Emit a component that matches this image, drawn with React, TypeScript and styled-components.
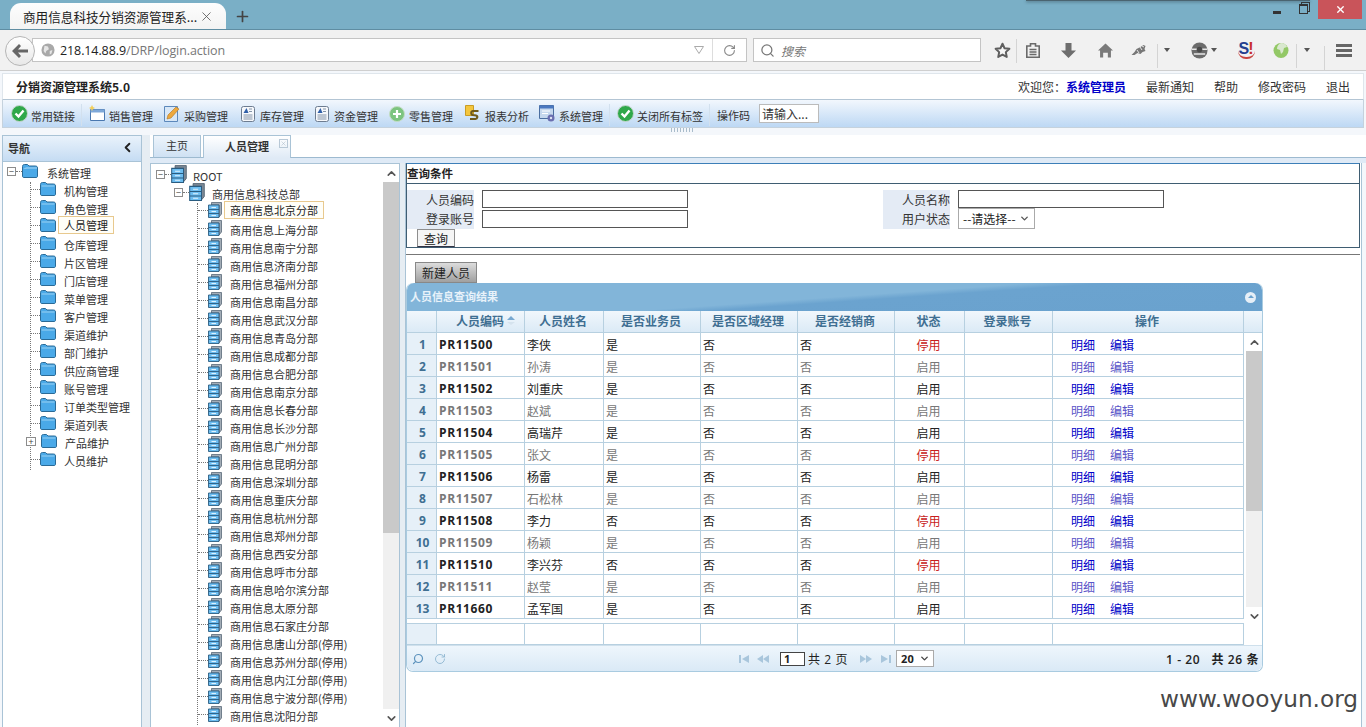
import React from 'react'
import styled, { createGlobalStyle } from 'styled-components'
import { ChevronDown, ChevronLeft, ChevronUp, Plus, RotateCw, Search, X } from 'lucide-react'

const CJK = `"Noto Sans CJK SC", "Liberation Sans", sans-serif`

const Global = createGlobalStyle`
  html, body { margin: 0; padding: 0; background: #fff; }
  body { font-family: ${CJK}; font-size: 12px; color: #222; }
  * { box-sizing: border-box; }
`

const Page = styled.div`
  width: 1366px;
  height: 727px;
  overflow: hidden;
  position: relative;
  display: flex;
  flex-direction: column;
`

/* ---------- browser chrome ---------- */

const TitleBar = styled.div`
  height: 29px;
  flex: none;
  background: #7aafc6;
  display: flex;
  align-items: flex-end;
  padding-left: 10px;
  position: relative;
`

const BrowserTab = styled.div`
  width: 216px;
  height: 26px;
  background: linear-gradient(#fdfdfd, #f3f3f3);
  border-radius: 11px 11px 0 0;
  display: flex;
  align-items: center;
  padding-left: 13px;
  font-size: 12.6px;
  color: #222;
  white-space: nowrap;
`

const TabTitle = styled.span`
  flex: 1;
  overflow: hidden;
`

const NewTab = styled.div`
  margin-left: 8px;
  height: 26px;
  display: flex;
  align-items: center;
  color: #444;
`

const Shadow = styled.div`
  position: absolute;
  top: 0;
  left: 1026px;
  width: 284px;
  height: 1px;
  background: #4a6470;
  box-shadow: 0 1px 3px #38505c;
`

const WindowButtons = styled.div`
  margin-left: auto;
  align-self: flex-start;
  display: flex;
  align-items: center;
  height: 19px;
  padding-right: 4px;
`

const Minimize = styled.span`
  width: 8px;
  height: 3px;
  background: #333;
  margin: 6px 18px 0 0;
`

const Restore = styled.span`
  width: 9px;
  height: 10px;
  border: 1px solid #333;
  border-top-width: 2px;
  margin: 0 10px 2px 0;
  box-shadow: 2px -2px 0 -1px #7aafc6, 2px -2px 0 0 #333;
`

const CloseBtn = styled.div`
  width: 44px;
  height: 19px;
  background: #c9545a;
  color: #fff;
  display: flex;
  align-items: center;
  justify-content: center;
`

const NavBar = styled.div`
  height: 42px;
  flex: none;
  background: #f1f1f1;
  border-top: 1px solid #5f8da2;
  border-bottom: 1px solid #cfcfcf;
  display: flex;
  align-items: center;
  padding-left: 5px;
  position: relative;
`

const BackBtn = styled.div`
  width: 30px;
  height: 30px;
  border-radius: 50%;
  border: 1px solid #b5b5b5;
  background: linear-gradient(#fff, #e8e8e8);
  display: flex;
  align-items: center;
  justify-content: center;
  flex: none;
  z-index: 1;
  margin-top: 1px;
`

const UrlBox = styled.div`
  width: 715px;
  height: 24px;
  margin-left: -3px;
  background: #fff;
  border: 1px solid #c4c4c4;
  display: flex;
  align-items: center;
  padding-left: 8px;
  font-family: "Open Sans", "Liberation Sans", sans-serif;
  font-size: 12.5px;
  letter-spacing: -.1px;
  color: #222;
`

const UrlPath = styled.span`
  color: #777;
`

const UrlTail = styled.div`
  margin-left: auto;
  height: 100%;
  display: flex;
  align-items: center;
  color: #888;
`

const UrlDivider = styled.span`
  width: 1px;
  height: 100%;
  background: #ddd;
  margin: 0 10px 0 8px;
`

const SearchBox = styled.div`
  width: 228px;
  height: 24px;
  margin-left: 6px;
  background: #fff;
  border: 1px solid #c4c4c4;
  display: flex;
  align-items: center;
  gap: 6px;
  padding-left: 6px;
  font-size: 12px;
  font-style: italic;
  color: #777;
`

const BrowserTools = styled.div`
  display: flex;
  align-items: center;
  margin-left: 10px;
  flex: 1;
  color: #666;
`

const ToolSlot = styled.span<{ $w: number; $ml?: number; $div?: number }>`
  width: ${p => p.$w}px;
  margin-left: ${p => p.$ml ?? 0}px;
  flex: none;
  display: flex;
  align-items: center;
  justify-content: center;
  position: relative;
  ${p =>
    p.$div !== undefined &&
    `&::before {
      content: '';
      position: absolute;
      left: ${p.$div}px;
      top: -4px;
      width: 1px;
      height: 24px;
      background: #d4d4d4;
    }`}
`

const Caret = styled.span`
  width: 0;
  height: 0;
  border-left: 3.5px solid transparent;
  border-right: 3.5px solid transparent;
  border-top: 4px solid #555;
`

const Globe = () => (
  <svg width="14" height="14" viewBox="0 0 16 16" style={{ flex: 'none', marginRight: 5 }}>
    <circle cx="8" cy="8" r="7.5" fill="#a9a9a9" />
    <path d="M4 3l4 1 1 3-3 2-1 3-2-3zM10 9l3-1-1 4-2 1z" fill="#e6e6e6" />
  </svg>
)

const ToolIcons = () => (
  <BrowserTools>
    <ToolSlot $w={22}>
      <svg width="17" height="17" viewBox="0 0 24 24">
        <path d="M12 2.500l2.900 6.300 6.800.8-5 4.700 1.300 6.800-6-3.400-6 3.400 1.300-6.800-5-4.700 6.800-.8z" fill="#f6f6f6" stroke="#5f5f5f" strokeWidth="2.800" strokeLinejoin="round" />
      </svg>
    </ToolSlot>
    <ToolSlot $w={40} $div={3}>
      <svg width="14" height="15" viewBox="0 0 14 15">
        <path d="M.8 3h3.700V.8h5V3h3.700v11.200H.8z" fill="none" stroke="#6a6a6a" strokeWidth="1.600" />
        <path d="M3.500 6.500h7M3.500 9h7M3.500 11.500h7" stroke="#6a6a6a" strokeWidth="1.500" />
      </svg>
    </ToolSlot>
    <ToolSlot $w={30}>
      <svg width="15" height="15" viewBox="0 0 15 15"><path d="M4.500 0h6v7.500H15L7.500 15 0 7.500h4.500z" fill="#6e6e6e" /></svg>
    </ToolSlot>
    <ToolSlot $w={44}>
      <svg width="15" height="15" viewBox="0 0 16 16"><path d="M8 .5l8 7.500h-2.200v7.500h-3.300v-5H5.500v5H2.200V8H0z" fill="#7a7a7a" /></svg>
    </ToolSlot>
    <ToolSlot $w={24}>
      <svg width="16" height="13" viewBox="0 0 16 13">
        <path d="M.5 11l3-3 2-3 4-2 3-2 2 1-1 3 1 2-3 1-2 2-3-1-3 2z" fill="#777" />
        <path d="M9 3l2 3M6 6l2 3M11 2l2 1" stroke="#e6e6e6" strokeWidth="1" />
      </svg>
    </ToolSlot>
    <ToolSlot $w={32} $div={6}><Caret /></ToolSlot>
    <ToolSlot $w={18} $ml={7}>
      <svg width="17" height="17" viewBox="0 0 18 18">
        <circle cx="9" cy="9" r="8.500" fill="#6c6c6c" />
        <path d="M1 7h16v1.500H1zM3 12h12v1.500H3z" fill="#e8e8e8" />
        <circle cx="9" cy="8" r="3" fill="#4a4a4a" />
      </svg>
    </ToolSlot>
    <ToolSlot $w={12}><Caret /></ToolSlot>
    <ToolSlot $w={52}>
      <SJ>S<SJBang>!</SJBang></SJ>
    </ToolSlot>
    <ToolSlot $w={18}>
      <svg width="16" height="17" viewBox="0 0 16 17">
        <circle cx="8" cy="8.500" r="7.500" fill="#93c866" />
        <path d="M8 1c3 0 5.500 2 6 4l-3 1-1 4-2 2-1-4-3-1C4 4 5.500 2 8 1z" fill="#d9e8cf" />
      </svg>
    </ToolSlot>
    <ToolSlot $w={34} $div={6}><Caret /></ToolSlot>
    <ToolSlot $w={1} $div={0} />
    <Hamburger />
  </BrowserTools>
)

const SJ = styled.span`
  font-family: "Liberation Sans", sans-serif;
  font-weight: 700;
  font-size: 16px;
  color: #24408f;
  line-height: 1;
  border-bottom: 2px solid #c8453f;
  border-radius: 0 0 8px 8px;
  padding: 0 1px;
`

const SJBang = styled.span`
  color: #c8302c;
  margin-left: -1px;
`

const Hamburger = styled.span`
  width: 16px;
  height: 13px;
  margin-left: 11px;
  flex: none;
  border-top: 3px solid #666;
  border-bottom: 3px solid #666;
  background: linear-gradient(#666, #666) center / 100% 3px no-repeat;
`

/* ---------- application header ---------- */

const AppWrap = styled.div`
  flex: 1;
  min-height: 0;
  background: #f4f7fb;
  display: flex;
  flex-direction: column;
  padding-top: 2px;
`

const AppHead = styled.div`
  height: 27px;
  flex: none;
  background: #fff;
  margin: 0 2px;
  border: 1px solid #dfe6ec;
  border-bottom: 1px solid #b3c5d4;
  display: flex;
  align-items: center;
  padding: 0 13px 0 13px;
`

const AppTitle = styled.div`
  font-weight: 600;
  font-size: 12px;
  color: #222;
`

const HeadLinks = styled.div`
  margin-left: auto;
  display: flex;
  gap: 20px;
  color: #333;
`

const UserName = styled.b`
  color: #0000c8;
  font-weight: 600;
`

const ToolBar = styled.div`
  height: 28px;
  flex: none;
  margin: 0 2px;
  border: 1px solid #c5d2dd;
  border-top: 0;
  background: linear-gradient(#f2f7fd, #bdd8f4);
  display: flex;
  align-items: center;
  padding-left: 8px;
`

const ToolItem = styled.div<{ $w: number; $sep?: boolean }>`
  width: ${p => p.$w}px;
  flex: none;
  display: flex;
  align-items: center;
  gap: 4px;
  font-size: 11px;
  color: #333;
  white-space: nowrap;
  position: relative;
  ${p =>
    p.$sep &&
    `&::after {
      content: '';
      position: absolute;
      right: 7px;
      top: 1px;
      width: 1px;
      height: 22px;
      background: #d2e0ee;
    }`}
`

const ToolGlyph = styled.span`
  width: 16px;
  height: 17px;
  flex: none;
  display: flex;
  align-items: center;
  justify-content: center;
`

const ToolText = styled.span`
  margin-top: 5px;
`

const OpLabel = styled.span`
  width: 42px;
  margin-top: 3px;
  font-size: 11px;
  color: #333;
`

const OpInput = styled.div`
  width: 60px;
  height: 19px;
  background: #fff;
  border: 1px solid #bbb;
  padding-left: 2px;
  font-size: 12px;
  line-height: 17px;
  color: #333;
  margin-bottom: 1px;
`

const GripBar = styled.div`
  height: 7px;
  flex: none;
  display: flex;
  justify-content: center;
`

const Grip = styled.span`
  width: 24px;
  height: 4px;
  background: repeating-linear-gradient(90deg, #a9bccb 0 1px, transparent 1px 3px);
`

/* ---------- main area ---------- */

const Main = styled.div`
  flex: 1;
  min-height: 0;
  display: flex;
`

const NavPanel = styled.div`
  width: 140px;
  margin-left: 2px;
  flex: none;
  background: #fff;
  border: 1px solid #a9c3d6;
  border-bottom: 0;
  display: flex;
  flex-direction: column;
`

const NavHead = styled.div`
  height: 26px;
  flex: none;
  background: linear-gradient(#e9f2fb, #c5dcf3);
  border-bottom: 1px solid #a9c3d6;
  display: flex;
  align-items: center;
  justify-content: space-between;
  padding: 0 6px 2px 5px;
  font-weight: 600;
  font-size: 11px;
  color: #333;
`

const Splitter = styled.div<{ $w: number }>`
  width: ${p => p.$w}px;
  flex: none;
  background: #e6edf3;
`

const Work = styled.div`
  flex: 1;
  min-width: 0;
  display: flex;
  flex-direction: column;
`

const TabStrip = styled.div`
  height: 23px;
  flex: none;
  background: #fff;
  border-bottom: 1px solid #9dbad0;
  display: flex;
  align-items: flex-end;
  padding-left: 3px;
  gap: 2px;
`

const PageTab = styled.div<{ $active?: boolean; $w: number }>`
  width: ${p => p.$w}px;
  height: 23px;
  margin-bottom: -1px;
  border: 1px solid #a9c3d6;
  border-bottom: ${p => (p.$active ? '0' : '1px solid #9dbad0')};
  background: ${p => (p.$active ? 'linear-gradient(#fff, #dfeaf6)' : 'linear-gradient(#edf4fb, #cfe1f3)')};
  display: flex;
  align-items: center;
  justify-content: ${p => (p.$active ? 'flex-start' : 'center')};
  padding: 0 0 3px ${p => (p.$active ? '21px' : '0')};
  font-size: 11px;
  font-weight: ${p => (p.$active ? 600 : 400)};
  color: #333;
  position: relative;
`

const TabClose = styled.span`
  position: absolute;
  top: 3px;
  right: 2px;
  width: 9px;
  height: 9px;
  border: 1px solid #b8c8d6;
  color: #9fb0be;
  display: flex;
  align-items: center;
  justify-content: center;
`

const StripGap = styled.div`
  height: 5px;
  flex: none;
  background: #dfeaf6;
`

const WorkBody = styled.div`
  flex: 1;
  min-height: 0;
  display: flex;
`

const TreePanel = styled.div`
  width: 250px;
  flex: none;
  background: #fff;
  border: 1px solid #a9c3d6;
  border-bottom: 0;
  display: flex;
  overflow: hidden;
`

const TreeScroll = styled.div`
  flex: 1;
  min-width: 0;
  padding: 3px 0 0 5px;
  overflow: hidden;
`

const ScrollBar = styled.div`
  width: 16px;
  flex: none;
  background: #f0f0f0;
  display: flex;
  flex-direction: column;
  align-items: center;
  color: #555;
`

const ScrollArrow = styled.div`
  height: 18px;
  flex: none;
  background: #fff;
  align-self: stretch;
  display: flex;
  align-items: center;
  justify-content: center;
`

const ScrollThumb = styled.div<{ $h: number }>`
  height: ${p => p.$h}px;
  flex: none;
  align-self: stretch;
  background: #c9c9c9;
`

const ScrollRest = styled.div`
  flex: 1;
`

/* tree */

const TreeRow = styled.div`
  height: 18px;
  display: flex;
  align-items: center;
  white-space: nowrap;
  font-size: 11px;
  color: #333;
`

const Toggle = styled.span`
  width: 9px;
  height: 9px;
  flex: none;
  border: 1px solid #8c8c8c;
  background: #fff;
  display: flex;
  align-items: center;
  justify-content: center;
  color: #444;
  font-size: 9px;
  line-height: 1;
  margin-top: -4px;
`

const Dots = styled.span<{ $w: number }>`
  width: ${p => p.$w}px;
  flex: none;
  border-top: 1px dotted #777;
  margin-top: -4px;
`

const Branch = styled.div<{ $ml: number }>`
  margin-left: ${p => p.$ml}px;
  border-left: 1px dotted #777;
`

const NodeLabel = styled.span<{ $ml: number; $selected?: boolean }>`
  margin-left: ${p => p.$ml}px;
  ${p =>
    p.$selected &&
    `
    border: 1px solid #e8c98e;
    background: #fffef8;
    height: 18px;
    line-height: 16px;
    padding: 0 5px;
    margin-left: ${p.$ml - 6}px;
    margin-top: -4px;
    color: #222;
  `}
`

const FolderIcon = ({ open }: { open?: boolean }) => (
  <svg width="16" height="14" viewBox="0 0 16 14" style={{ flex: 'none', marginTop: -5 }}>
    <path d="M.5 2.500C.5 1 1.500.5 2.500.5h3L7 2h6.500c1 0 2 .5 2 2v8c0 1-.5 1.500-1.500 1.500H2c-1 0-1.500-.5-1.500-1.500z" fill="#4aa9e8" stroke="#2a6a96" />
    {open ? <path d="M1 5l3-1.500h11v1H5z" fill="#a8d8f6" /> : <path d="M1.500 3.500h13v1h-13z" fill="#9ad0f2" />}
  </svg>
)

const CabinetIcon = ({ big }: { big?: boolean }) => (
  <svg width={big ? 16 : 14} height={big ? 18 : 16} viewBox="0 0 14 16" style={{ flex: 'none', marginTop: -4 }}>
    <path d="M3.500.5h10v11.500l-2.500 3V3h-7.500z" fill={big ? '#7d8894' : '#a3adb7'} stroke="#47596a" strokeWidth=".7" />
    <path d="M.5 3h10.500v12.500H.5z" fill="#6dbdf0" stroke="#2a5c80" strokeWidth=".9" />
    <path d="M.5 7.500h10.500M.5 11.500h10.500" stroke="#2a5c80" strokeWidth=".9" fill="none" />
    <path d="M3.500 5.500h4.500M3.500 9.500h4.500M3.500 13.500h4.500" stroke="#dff1fc" strokeWidth="1" fill="none" />
  </svg>
)

const navItems = ['机构管理', '角色管理', '人员管理', '仓库管理', '片区管理', '门店管理', '菜单管理', '客户管理', '渠道维护', '部门维护', '供应商管理', '账号管理', '订单类型管理', '渠道列表', '产品维护', '人员维护']

const branches = ['北京', '上海', '南宁', '济南', '福州', '南昌', '武汉', '青岛', '成都', '合肥', '南京', '长春', '长沙', '广州', '昆明', '深圳', '重庆', '杭州', '郑州', '西安', '呼市', '哈尔滨', '太原', '石家庄', '唐山', '苏州', '内江', '宁波', '沈阳']

const stopped = ['唐山', '苏州', '内江', '宁波']

const NavBody = styled.div`
  flex: 1;
  overflow: hidden;
  padding: 2px 0 0 4px;
`

const NavPlus = styled(Toggle)`
  margin-left: -5px;
  margin-right: 5px;
  width: 10px;
`

const NavTree = () => (
  <NavBody>
    <TreeRow>
      <Toggle>−</Toggle>
      <Dots $w={6} />
      <FolderIcon open />
      <NodeLabel $ml={9}>系统管理</NodeLabel>
    </TreeRow>
    <Branch $ml={23}>
      {navItems.map((n, i) => (
        <TreeRow key={n + i}>
          {n === '产品维护' ? <NavPlus>+</NavPlus> : <Dots $w={9} />}
          <FolderIcon />
          <NodeLabel $ml={8} $selected={n === '人员管理'}>{n}</NodeLabel>
        </TreeRow>
      ))}
    </Branch>
  </NavBody>
)

const OrgIndent = styled.div`
  margin-left: 18px;
`

const OrgTree = () => (
  <TreeScroll>
    <TreeRow>
      <Toggle>−</Toggle>
      <Dots $w={6} />
      <CabinetIcon big />
      <NodeLabel $ml={6}>ROOT</NodeLabel>
    </TreeRow>
    <OrgIndent>
      <TreeRow>
        <Toggle>−</Toggle>
        <Dots $w={6} />
        <CabinetIcon big />
        <NodeLabel $ml={7}>商用信息科技总部</NodeLabel>
      </TreeRow>
      <Branch $ml={23}>
        {branches.map((b, i) => (
          <TreeRow key={b}>
            <Dots $w={10} />
            <CabinetIcon />
            <NodeLabel $ml={8} $selected={i === 0}>
              商用信息{b}分部{stopped.includes(b) ? '(停用)' : ''}
            </NodeLabel>
          </TreeRow>
        ))}
      </Branch>
    </OrgIndent>
  </TreeScroll>
)

/* ---------- query box ---------- */

const RightPane = styled.div`
  flex: 1;
  min-width: 0;
  background: #fff;
  border-left: 1px solid #a9c3d6;
  margin-right: 4px;
  border-right: 1px solid #a9c3d6;
`

const QueryBox = styled.div`
  height: 85px;
  margin-right: 1px;
  border: 1px solid #3f5d72;
  border-top-color: #3d7fb8;
  display: flex;
  flex-direction: column;
`

const QueryTitle = styled.div`
  height: 20px;
  flex: none;
  border-bottom: 1px solid #3f5d72;
  font-weight: 600;
  font-size: 11.5px;
  line-height: 19px;
  color: #222;
`

const QueryGrid = styled.div`
  display: flex;
  padding-top: 6px;
`

const FieldGroup = styled.div`
  width: 476px;
  display: flex;
  gap: 8px;
`

const FieldLabels = styled.div`
  width: 67px;
  height: 39px;
  background: #e4ebf5;
  text-align: right;
  line-height: 19px;
  color: #333;
`

const FieldControls = styled.div`
  display: flex;
  flex-direction: column;
  gap: 2px;
`

const TextBox = styled.div`
  width: 206px;
  height: 18px;
  background: #fff;
  border: 1px solid #555;
`

const SelectBox = styled.div`
  width: 77px;
  height: 21px;
  margin-top: -2px;
  background: #fff;
  border: 1px solid #aaa;
  display: flex;
  align-items: center;
  justify-content: space-between;
  padding: 0 4px;
  font-size: 12px;
  color: #222;
`

const QueryButton = styled.div`
  width: 38px;
  height: 18px;
  margin: 0 0 0 10px;
  background: #f5f5f5;
  border: 1px solid #8e8e8e;
  border-bottom-color: #334;
  display: flex;
  align-items: center;
  justify-content: center;
  color: #222;
`

const Rule = styled.div`
  height: 1px;
  background: #777;
  margin: 6px 1px 7px 0;
`

const NewButton = styled.div`
  width: 62px;
  height: 21px;
  margin-left: 9px;
  background: linear-gradient(#dcdcdc, #a0a0a0);
  border: 1px solid #888;
  display: flex;
  align-items: center;
  justify-content: center;
  color: #222;
`

/* ---------- data grid ---------- */

const GridPanel = styled.div`
  width: 857px;
  border: 1px solid #a9cbe0;
  border-top: 0;
  border-radius: 7px;
`

const GridTitle = styled.div`
  height: 28px;
  border-radius: 7px 7px 0 0;
  background: linear-gradient(176deg, #82b5d9 0 50%, #6ba3cf 56%, #6aa2ce 100%);
  display: flex;
  align-items: center;
  justify-content: space-between;
  padding: 0 6px 3px 3px;
  color: #e8f2fa;
  font-weight: 600;
  font-size: 11px;
`

const Collapse = styled.span`
  width: 11px;
  height: 11px;
  margin-top: 3px;
  border-radius: 50%;
  background: #e6eff7;
  position: relative;
  &::after {
    content: '';
    position: absolute;
    left: 2.5px;
    top: 3.5px;
    border-left: 3px solid transparent;
    border-right: 3px solid transparent;
    border-bottom: 3px solid #6aa2ce;
  }
`

const GridBody = styled.div`
  display: flex;
`

const GridMain = styled.div`
  width: 837px;
  flex: none;
`

const Columns = styled.div<{ $h: number; $head?: boolean; $muted?: boolean }>`
  display: grid;
  grid-template-columns: 30px 88px 79px 97px 97px 97px 70px 88px 191px;
  height: ${p => p.$h}px;
  border-bottom: 1px solid #b7d0e0;
  background: ${p => (p.$head ? 'linear-gradient(#f1f7fc, #dbeaf6)' : '#fff')};
  color: ${p => (p.$muted ? '#777' : '#222')};
`

const Cell = styled.div<{ $center?: boolean; $head?: boolean }>`
  border-right: 1px solid #b7d0e0;
  display: flex;
  align-items: center;
  justify-content: ${p => (p.$center ? 'center' : 'flex-start')};
  padding-left: ${p => (p.$center ? 0 : 2)}px;
  padding-top: 1px;
  ${p => p.$head && 'font-weight: 600; color: #3f6f92; font-size: 12px; padding: 0 2px 2px 0;'}
`

const SortedHead = styled(Cell)`
  justify-content: flex-start;
  padding-left: 19px;
`

const RowNo = styled(Cell)`
  background: #e6f0f8;
  justify-content: center;
  font-family: "Open Sans", "Liberation Sans", sans-serif;
  font-weight: 700;
  font-size: 12px;
  color: #3f6f92;
`

const CodeCell = styled(Cell)`
  font-family: "Open Sans", "Liberation Sans", sans-serif;
  font-weight: 700;
  font-size: 12px;
  letter-spacing: .6px;
`

const StateCell = styled(Cell)<{ $off?: boolean }>`
  justify-content: center;
  padding-left: 0;
  padding-right: 2px;
  color: ${p => (p.$off ? '#c81e1e' : 'inherit')};
`

const Ops = styled(Cell)`
  padding-left: 18px;
  gap: 15px;
`

const OpLink = styled.span<{ $muted?: boolean }>`
  color: ${p => (p.$muted ? '#5a55c8' : '#0000c8')};
`

const SortMark = styled.span`
  margin-left: 3px;
  display: inline-flex;
  flex-direction: column;
  gap: 2px;
  &::before, &::after {
    content: '';
    border-left: 4px solid transparent;
    border-right: 4px solid transparent;
  }
  &::before { border-bottom: 4px solid #78a8d0; }
  &::after { border-top: 3px solid #d5e3ee; }
`

const HeadFill = styled.div`
  height: 22px;
  background: linear-gradient(#f1f7fc, #dbeaf6);
  border-bottom: 1px solid #b7d0e0;
`

const GridSide = styled.div`
  flex: 1;
  display: flex;
  flex-direction: column;
`

const RowScroll = styled(ScrollBar)`
  width: 16px;
  margin-left: 2px;
  height: 292px;
`

const GapLine = styled.div`
  height: 5px;
  border-bottom: 1px solid #b7d0e0;
`

const Footer = styled.div`
  height: 26px;
  border-top: 1px solid #cfe0ec;
  border-radius: 0 0 7px 7px;
  background: linear-gradient(#eef6fc, #dae9f6);
  display: flex;
  align-items: center;
  padding: 0 3px 0 5px;
  color: #222;
`

const PagerGroup = styled.div`
  display: flex;
  align-items: center;
  margin-left: 292px;
`

const PageInput = styled.span`
  width: 25px;
  height: 14px;
  border: 1px solid #444;
  background: #fff;
  padding-left: 3px;
  font-family: "Open Sans", sans-serif;
  font-weight: 700;
  font-size: 11px;
  line-height: 12px;
  margin: 0 3px 0 11px;
`

const PageText = styled.span`
  font-size: 12px;
  letter-spacing: .6px;
  font-family: "Open Sans", ${CJK};
`

const PageSize = styled.div`
  width: 38px;
  height: 17px;
  margin-left: 4px;
  background: #fff;
  border: 1px solid #aaa;
  display: flex;
  align-items: center;
  justify-content: space-between;
  padding: 0 3px 0 4px;
  font-family: "Open Sans", sans-serif;
  font-weight: 700;
  font-size: 11px;
`

const Summary = styled.div`
  margin-left: auto;
  font-family: "Open Sans", ${CJK};
  font-size: 12px;
  font-weight: 600;
  letter-spacing: .6px;
  white-space: pre;
`

const Watermark = styled.div`
  position: absolute;
  right: 8px;
  top: 685px;
  font-family: "DejaVu Sans", sans-serif;
  font-size: 23.2px;
  color: #484848;
`

/* toolbar glyphs */

const CheckBall = () => (
  <svg width="17" height="17" viewBox="0 0 17 17" style={{ flex: 'none' }}>
    <circle cx="8.5" cy="8.5" r="8" fill="#2fa84a" stroke="#c8d6d0" />
    <path d="M4.500 8.500l3 3 5-6" fill="none" stroke="#fff" strokeWidth="2.400" />
  </svg>
)

const PlusBall = () => (
  <svg width="16" height="16" viewBox="0 0 16 16" style={{ flex: 'none' }}>
    <circle cx="8" cy="8" r="7.500" fill="#7cc47f" stroke="#c3dcc4" />
    <path d="M8 4v8M4 8h8" stroke="#fff" strokeWidth="2.200" />
  </svg>
)

const WindowGlyph = () => (
  <svg width="16" height="17" viewBox="0 0 16 17" style={{ flex: 'none' }}>
    <path d="M1.500 4.500h14v11h-14z" fill="#fff" stroke="#4a78b0" />
    <path d="M1.500 4.500h14v3h-14z" fill="#7ea8d8" />
    <path d="M3 0l1 2 2 1-2 1-1 2-1-2-2-1 2-1z" fill="#f3cf5b" />
  </svg>
)

const PencilGlyph = () => (
  <svg width="16" height="17" viewBox="0 0 16 17" style={{ flex: 'none' }}>
    <path d="M.5 1.500h13v15H.5z" fill="#d8e7f6" stroke="#5c88bb" />
    <path d="M3 14l1-4 8-8 3 2-8 9z" fill="#eda83d" stroke="#b07620" strokeWidth=".6" />
  </svg>
)

const DocGlyph = () => (
  <svg width="16" height="16" viewBox="0 0 16 16" style={{ flex: 'none' }}>
    <rect x="1.500" y=".5" width="13" height="15" rx="2" fill="#f6f8fb" stroke="#6d7c90" />
    <path d="M3.500 7l3-5 2 5z" fill="#2f5fa8" />
    <path d="M9 3h3M9 5.500h3M3.500 9h9M3.500 11h9M3.500 13h9" stroke="#8494a8" />
  </svg>
)

const ReportGlyph = () => (
  <svg width="16" height="17" viewBox="0 0 16 17" style={{ flex: 'none' }}>
    <path d="M.5.500h8v10h-8z" fill="#f4c63d" stroke="#c99c25" />
    <path d="M13.500 6H8C6 6 5.500 9.500 8 10l3 .5c2 .5 1.500 3.500-.5 3.500H5" fill="none" stroke="#6e5a1e" strokeWidth="2.200" />
  </svg>
)

const SystemGlyph = () => (
  <svg width="16" height="17" viewBox="0 0 16 17" style={{ flex: 'none' }}>
    <path d="M.5.500h14v13H.5z" fill="#c5d8ee" stroke="#4a6ea0" />
    <path d="M.5.500h14v3H.5z" fill="#4a78c0" />
    <path d="M3 6h8M3 8.500h6" stroke="#fff" />
    <circle cx="12" cy="13" r="3.500" fill="#6a6fb0" />
    <circle cx="12" cy="13" r="1.200" fill="#dfe3f2" />
  </svg>
)

const tools: { w: number; text: string; icon: React.ReactNode; sep?: boolean }[] = [
  { w: 78, text: '常用链接', icon: <CheckBall />, sep: true },
  { w: 75, text: '销售管理', icon: <WindowGlyph /> },
  { w: 76, text: '采购管理', icon: <PencilGlyph /> },
  { w: 74, text: '库存管理', icon: <DocGlyph /> },
  { w: 75, text: '资金管理', icon: <DocGlyph /> },
  { w: 76, text: '零售管理', icon: <PlusBall /> },
  { w: 74, text: '报表分析', icon: <ReportGlyph /> },
  { w: 78, text: '系统管理', icon: <SystemGlyph />, sep: true },
  { w: 100, text: '关闭所有标签', icon: <CheckBall />, sep: true },
]

const people = [
  ['PR11500', '李侠', '是', '停用'],
  ['PR11501', '孙涛', '是', '启用'],
  ['PR11502', '刘重庆', '是', '启用'],
  ['PR11503', '赵斌', '是', '启用'],
  ['PR11504', '高瑞芹', '是', '启用'],
  ['PR11505', '张文', '是', '停用'],
  ['PR11506', '杨雷', '是', '启用'],
  ['PR11507', '石松林', '是', '启用'],
  ['PR11508', '李力', '否', '停用'],
  ['PR11509', '杨颖', '是', '启用'],
  ['PR11510', '李兴芬', '否', '停用'],
  ['PR11511', '赵莹', '是', '启用'],
  ['PR11660', '孟军国', '是', '启用'],
]

const heads = ['人员姓名', '是否业务员', '是否区域经理', '是否经销商', '状态', '登录账号', '操作']

const PagerIcon = ({ d, x }: { d: string; x?: number }) => (
  <svg width="12" height="10" viewBox="0 0 12 10" style={{ marginLeft: x ?? 0 }}>
    <path d={d} fill="#a9c6dc" />
  </svg>
)

export default function App() {
  return (
    <Page>
      <Global />
      <TitleBar>
        <BrowserTab>
          <TabTitle>商用信息科技分销资源管理系...</TabTitle>
          <X size={15} strokeWidth={1.3} color="#555" style={{ marginRight: 12, flex: 'none' }} />
        </BrowserTab>
        <NewTab><Plus size={17} strokeWidth={2.4} /></NewTab>
        <Shadow />
        <WindowButtons>
          <Minimize />
          <Restore />
          <CloseBtn><X size={11} strokeWidth={3} /></CloseBtn>
        </WindowButtons>
      </TitleBar>
      <NavBar>
        <BackBtn>
          <svg width="16" height="14" viewBox="0 0 16 14"><path d="M7 0l2 2-3 3.500h10v3H6L9 12l-2 2-7-7z" fill="#666" /></svg>
        </BackBtn>
        <UrlBox>
          <Globe />
          218.14.88.9<UrlPath>/DRP/login.action</UrlPath>
          <UrlTail>
            <svg width="10" height="8" viewBox="0 0 10 8"><path d="M.5.500h9L5 7.500z" fill="none" stroke="#aaa" /></svg>
            <UrlDivider />
            <RotateCw size={13} strokeWidth={2} color="#888" style={{ marginRight: 10 }} />
          </UrlTail>
        </UrlBox>
        <SearchBox>
          <Search size={15} strokeWidth={2} color="#777" />
          搜索
        </SearchBox>
        <ToolIcons />
      </NavBar>
      <AppWrap>
        <AppHead>
          <AppTitle>分销资源管理系统5.0</AppTitle>
          <HeadLinks>
            <span>欢迎您：<UserName>系统管理员</UserName></span>
            <span>最新通知</span>
            <span>帮助</span>
            <span>修改密码</span>
            <span>退出</span>
          </HeadLinks>
        </AppHead>
        <ToolBar>
          {tools.map(t => (
            <ToolItem key={t.text + t.w} $w={t.w} $sep={t.sep}>
              <ToolGlyph>{t.icon}</ToolGlyph>
              <ToolText>{t.text}</ToolText>
            </ToolItem>
          ))}
          <OpLabel>操作码</OpLabel>
          <OpInput>请输入...</OpInput>
        </ToolBar>
        <GripBar><Grip /></GripBar>
        <Main>
          <NavPanel>
            <NavHead>导航<ChevronLeft size={15} strokeWidth={3} color="#222" /></NavHead>
            <NavTree />
          </NavPanel>
          <Splitter $w={8} />
          <Work>
            <TabStrip>
              <PageTab $w={48}>主页</PageTab>
              <PageTab $w={88} $active>
                人员管理
                <TabClose><X size={7} strokeWidth={1.5} /></TabClose>
              </PageTab>
            </TabStrip>
            <StripGap />
            <WorkBody>
              <TreePanel>
                <OrgTree />
                <ScrollBar>
                  <ScrollArrow><ChevronUp size={13} strokeWidth={3} /></ScrollArrow>
                  <ScrollThumb $h={351} />
                  <ScrollRest />
                  <ScrollArrow><ChevronDown size={13} strokeWidth={3} /></ScrollArrow>
                </ScrollBar>
              </TreePanel>
              <Splitter $w={5} />
              <RightPane>
                <QueryBox>
                  <QueryTitle>查询条件</QueryTitle>
                  <QueryGrid>
                    <FieldGroup>
                      <FieldLabels>人员编码<br />登录账号</FieldLabels>
                      <FieldControls><TextBox /><TextBox /></FieldControls>
                    </FieldGroup>
                    <FieldGroup>
                      <FieldLabels>人员名称<br />用户状态</FieldLabels>
                      <FieldControls>
                        <TextBox />
                        <SelectBox>--请选择--<ChevronDown size={11} strokeWidth={3} color="#555" /></SelectBox>
                      </FieldControls>
                    </FieldGroup>
                  </QueryGrid>
                  <QueryButton>查询</QueryButton>
                </QueryBox>
                <Rule />
                <NewButton>新建人员</NewButton>
                <GridPanel>
                  <GridTitle>人员信息查询结果<Collapse /></GridTitle>
                  <GridBody>
                    <GridMain>
                      <Columns $h={22} $head>
                        <Cell />
                        <SortedHead $head>人员编码<SortMark /></SortedHead>
                        {heads.map(h => <Cell key={h} $center $head>{h}</Cell>)}
                      </Columns>
                      {people.map((p, i) => (
                        <Columns key={p[0]} $h={22} $muted={i % 2 === 1}>
                          <RowNo>{i + 1}</RowNo>
                          <CodeCell>{p[0]}</CodeCell>
                          <Cell>{p[1]}</Cell>
                          <Cell>{p[2]}</Cell>
                          <Cell>否</Cell>
                          <Cell>否</Cell>
                          <StateCell $off={p[3] === '停用'}>{p[3]}</StateCell>
                          <Cell />
                          <Ops>
                            <OpLink $muted={i % 2 === 1}>明细</OpLink>
                            <OpLink $muted={i % 2 === 1}>编辑</OpLink>
                          </Ops>
                        </Columns>
                      ))}
                      <GapLine />
                      <Columns $h={21}>
                        <RowNo />
                        <Cell /><Cell /><Cell /><Cell /><Cell /><Cell /><Cell /><Cell />
                      </Columns>
                    </GridMain>
                    <GridSide>
                      <HeadFill />
                      <RowScroll>
                        <ScrollArrow><ChevronUp size={13} strokeWidth={3} /></ScrollArrow>
                        <ScrollThumb $h={160} />
                        <ScrollRest />
                        <ScrollArrow><ChevronDown size={13} strokeWidth={3} /></ScrollArrow>
                      </RowScroll>
                    </GridSide>
                  </GridBody>
                  <Footer>
                    <Search size={12} strokeWidth={2.4} color="#5d93bd" style={{ transform: 'scaleX(-1)' }} />
                    <RotateCw size={12} strokeWidth={1.8} color="#8db5d0" style={{ marginLeft: 10 }} />
                    <PagerGroup>
                      <PagerIcon d="M1 1h2v8H1zM11 1v8L4 5z" />
                      <PagerIcon x={7} d="M6 1v8L0 5zM12 1v8L6 5z" />
                      <PageInput>1</PageInput>
                      <PageText>共 2 页</PageText>
                      <PagerIcon x={12} d="M0 1l6 4-6 4zM6 1l6 4-6 4z" />
                      <PagerIcon x={8} d="M1 1l7 4-7 4zM9 1h2v8H9z" />
                      <PageSize>20<ChevronDown size={11} strokeWidth={3} color="#444" /></PageSize>
                    </PagerGroup>
                    <Summary>1 - 20   共 26 条</Summary>
                  </Footer>
                </GridPanel>
              </RightPane>
            </WorkBody>
          </Work>
        </Main>
      </AppWrap>
      <Watermark>www.wooyun.org</Watermark>
    </Page>
  )
}
